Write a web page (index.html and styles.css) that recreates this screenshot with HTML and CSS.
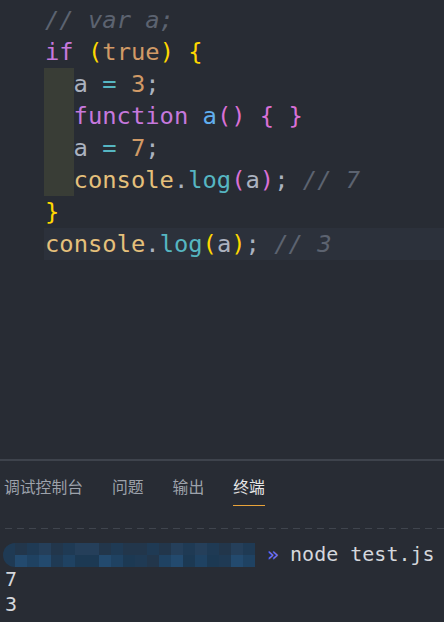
FILE: index.html
```html
<!DOCTYPE html>
<html lang="en">
<head>
    <meta charset="UTF-8">
    <meta name="viewport" content="width=device-width, initial-scale=1.0">
    <title>test.js</title>
    <link rel="stylesheet" href="styles.css">
</head>
<body>
    <div class="editor">
        <div class="code">
            <div class="line"><span class="punc">};</span></div>
            <div class="line"><span class="comment">// var a;</span></div>
            <div class="line"><span class="kw">if</span> <span class="b1">(</span><span class="num">true</span><span class="b1">)</span> <span class="b1">{</span></div>
            <div class="line"><span class="indent"></span><span class="var">a</span> <span class="op">=</span> <span class="num">3</span><span class="punc">;</span></div>
            <div class="line"><span class="indent"></span><span class="kw">function</span> <span class="fn">a</span><span class="b2">()</span> <span class="b2">{ }</span></div>
            <div class="line"><span class="indent"></span><span class="var">a</span> <span class="op">=</span> <span class="num">7</span><span class="punc">;</span></div>
            <div class="line"><span class="indent"></span><span class="obj">console</span><span class="punc">.</span><span class="method">log</span><span class="b2">(</span><span class="var">a</span><span class="b2">)</span><span class="punc">;</span> <span class="comment">// 7</span></div>
            <div class="line"><span class="b1">}</span></div>
            <div class="line current"><span class="obj">console</span><span class="punc">.</span><span class="method">log</span><span class="b1">(</span><span class="var">a</span><span class="b1">)</span><span class="punc">;</span> <span class="comment">// 3</span></div>
        </div>
    </div>

    <div class="panel">
        <div class="tabs">
            <span class="tab">调试控制台</span>
            <span class="tab">问题</span>
            <span class="tab">输出</span>
            <span class="tab active">终端</span>
        </div>
        <div class="dashes"></div>
        <div class="terminal">
            <div class="prompt">
                <div class="blur">
                    <div class="row top">
                        <i class="c2"></i><i class="c1"></i><i class="c2"></i><i class="c3"></i><i class="c1"></i><i class="c2"></i><i class="c3"></i><i class="c3"></i><i class="c1"></i><i class="c2"></i><i class="c1"></i><i class="c1"></i><i class="c2"></i><i class="c1"></i><i class="c3"></i><i class="c2"></i><i class="c3"></i><i class="c2"></i><i class="c1"></i><i class="c3"></i><i class="c2"></i>
                    </div>
                    <div class="row bottom">
                        <i class="c2"></i><i class="c5"></i><i class="c4"></i><i class="c5"></i><i class="c2"></i><i class="c4"></i><i class="c6"></i><i class="c6"></i><i class="c5"></i><i class="c4"></i><i class="c6"></i><i class="c2"></i><i class="c1"></i><i class="c4"></i><i class="c5"></i><i class="c6"></i><i class="c4"></i><i class="c6"></i><i class="c2"></i><i class="c5"></i><i class="c4"></i>
                    </div>
                </div>
                <span class="arrow">»</span>
                <span>node test.js</span>
            </div>
            <div>7</div>
            <div>3</div>
        </div>
    </div>
</body>
</html>
```

FILE: styles.css
```css
body {
    margin: 0;
    padding: 0;
    background-color: #282c34;
    overflow: hidden;
}

.editor {
    height: 459px;
    overflow: hidden;
}

.code {
    margin-top: -28px;
    font-family: "DejaVu Sans Mono", monospace;
    font-size: 23.8px;
    color: #abb2bf;
}

.line {
    height: 32px;
    line-height: 32px;
    padding-left: 45px;
    white-space: pre;
}

.line.current {
    margin-left: 44px;
    padding-left: 1px;
    background-color: #2c313b;
}

.indent {
    display: inline-block;
    width: 28.6px;
    height: 32px;
    vertical-align: top;
    margin-left: -1px;
    padding-left: 1px;
    background-color: #393d36;
}

.comment {
    color: #5c6370;
    font-style: italic;
}

.kw { color: #c678dd; }
.num { color: #d19a66; }
.var { color: #abb2bf; }
.op { color: #56b6c2; }
.fn { color: #61afef; }
.obj { color: #e5c07b; }
.method { color: #56b6c2; }
.punc { color: #abb2bf; }
.b1 { color: #ffd700; }
.b2 { color: #da70d6; }

.panel {
    border-top: 2px solid #3e434c;
}

.tabs {
    display: flex;
    gap: 29px;
    padding: 14px 0 0 4px;
    font-family: "Noto Sans CJK SC", sans-serif;
    font-size: 15.8px;
}

.tab {
    color: #9da2ab;
    line-height: 24px;
    padding-bottom: 6px;
    white-space: nowrap;
}

.tab.active {
    color: #e7e7e7;
    border-bottom: 1.5px solid #e8a33a;
}

.dashes {
    margin: 22px 0 0 5px;
    height: 1px;
    background-image: linear-gradient(to right, #40454e 60%, transparent 60%);
    background-size: 12px 1px;
}

.terminal {
    padding: 13px 0 0 5px;
    font-family: "DejaVu Sans Mono", monospace;
    font-size: 20px;
    line-height: 25px;
    color: #d4d7dc;
}

.prompt {
    display: flex;
    align-items: center;
    gap: 12px;
}

.blur {
    width: 252px;
    height: 24px;
    margin-left: -2px;
    border-radius: 12px 0 0 12px;
    overflow: hidden;
}

.row {
    display: flex;
    height: 12px;
}

.row i {
    flex: 0 0 12px;
    height: 12px;
}

.c1 { background-color: #22364b; }
.c2 { background-color: #1f3a54; }
.c3 { background-color: #253f5a; }
.c4 { background-color: #1f4262; }
.c5 { background-color: #234a6e; }
.c6 { background-color: #1c3953; }

.arrow {
    color: #6f6ff2;
    margin-right: -1px;
}
```
